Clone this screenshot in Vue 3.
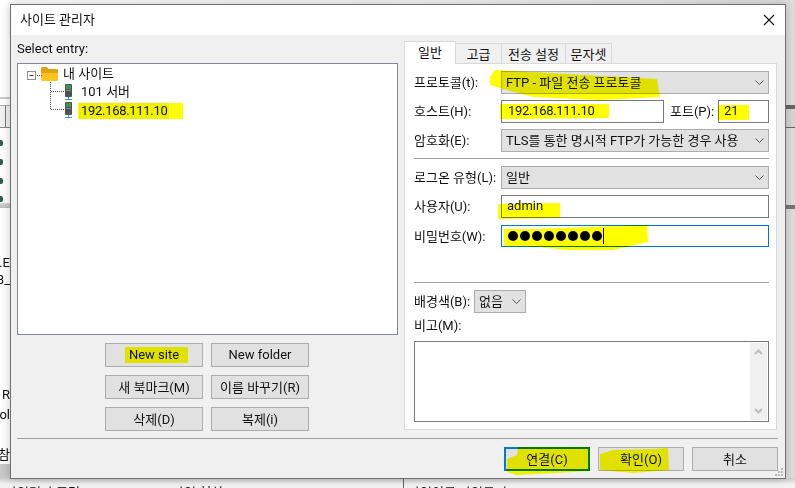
<script setup>
const siteButtons = ['New site', 'New folder', '새 북마크(M)', '이름 바꾸기(R)', '삭제(D)', '복제(i)']
const tabs = ['일반', '고급', '전송 설정', '문자셋']
const dots = 8
</script>

<template>
  <div class="desk">
    <div class="back">
      <div class="b-line l1"></div>
      <div class="b-bar left-bar"><i></i></div>
      <div class="b-bar right-bar"></div>
      <div class="b-line r2"></div>
      <i v-for="y in [140, 159, 178, 196]" :key="y" class="mini" :style="{ top: y + 'px' }"></i>
      <div class="b-line l2"></div>
      <span class="clip c1">E.E</span>
      <span class="clip c2">8_</span>
      <span class="clip c3">R</span>
      <span class="clip c4">Fol</span>
      <span class="clip c5">참</span>
      <div class="b-gray"></div>
      <div class="b-foot">
        <span class="ft a">파일명과 폴더</span>
        <span class="ft b">파일 형식</span>
        <span class="ft c">파일이름 파일크기</span>
      </div>
    </div>

    <section class="dialog">
      <header class="title">
        <span>사이트 관리자</span>
        <svg class="close" width="12" height="12" viewBox="0 0 12 12"><path d="M1 1l10 10M11 1L1 11" stroke="#111" stroke-width="1.1" fill="none"/></svg>
      </header>

      <div class="main">
        <div class="col-left">
          <div class="select-label">Select entry:</div>
          <div class="tree">
            <svg class="tree-lines" width="60" height="60" viewBox="0 0 60 60">
              <rect x="9.5" y="7.5" width="8" height="8" fill="#fff" stroke="#8f8f8f"/>
              <path d="M11.5 11.5h4" stroke="#333"/>
              <path d="M19 11.5h5M32.5 18v28M33 27.5h13M33 45.5h13" stroke="#555" stroke-dasharray="1 1" fill="none"/>
            </svg>
            <div class="node root">
              <svg width="17" height="16" viewBox="0 0 17 16">
                <path d="M0 2.5Q0 1 1.5 1h4.5l1.5 2h8Q17 3 17 4.500V7H0Z" fill="#dfa311"/>
                <path d="M0 7h17v6.500q0 1.500-1.500 1.500H1.500Q0 15 0 13.500Z" fill="#ffc31f"/>
              </svg>
              <span>내 사이트</span>
            </div>
            <div class="node child" v-for="(n, i) in ['101 서버', '192.168.111.10']" :key="n">
              <svg width="9" height="17" viewBox="0 0 9 17">
                <rect x="1" y="0" width="7" height="13" rx="1" fill="#4f5353"/>
                <rect x="2" y="1" width="5" height="4" fill="#3a9a4a"/>
                <rect x="2" y="6" width="5" height="1" fill="#8a8e8e"/>
                <path d="M4.500 13v2M1 15.500h7" stroke="#3c8fd8"/>
              </svg>
              <span :class="{ sel: i === 1, ip: i === 1 }">{{ n }}</span>
            </div>
          </div>
          <div class="site-btns">
            <button v-for="b in siteButtons" :key="b" class="btn">{{ b }}</button>
          </div>
        </div>

        <div class="col-right">
          <div class="tabs">
            <div v-for="(t, i) in tabs" :key="t" class="tab" :class="['t' + i, { on: i === 0 }]">{{ t }}</div>
          </div>
          <div class="panel">
            <div class="row">
              <label>프로토콜(t):</label>
              <div class="combo grow"><span>FTP - 파일 전송 프로토콜</span><svg class="chev" width="9" height="5" viewBox="0 0 9 5"><path d="M.5.500l4 4 4-4" fill="none" stroke="#555"/></svg></div>
            </div>
            <div class="row">
              <label>호스트(H):</label>
              <div class="input host ip">192.168.111.10</div>
              <label class="port-label">포트(P):</label>
              <div class="input port">21</div>
            </div>
            <div class="row">
              <label>암호화(E):</label>
              <div class="combo grow"><span>TLS를 통한 명시적 FTP가 가능한 경우 사용</span><svg class="chev" width="9" height="5" viewBox="0 0 9 5"><path d="M.5.500l4 4 4-4" fill="none" stroke="#555"/></svg></div>
            </div>
            <hr class="sep s1" />
            <div class="row">
              <label>로그온 유형(L):</label>
              <div class="combo grow"><span>일반</span><svg class="chev" width="9" height="5" viewBox="0 0 9 5"><path d="M.5.500l4 4 4-4" fill="none" stroke="#555"/></svg></div>
            </div>
            <div class="row">
              <label>사용자(U):</label>
              <div class="input grow user">admin</div>
            </div>
            <div class="row pw-row">
              <label>비밀번호(W):</label>
              <div class="input grow pw" aria-label="password">
                <i v-for="d in dots" :key="d" class="dot"></i><i class="caret"></i>
              </div>
            </div>
            <hr class="sep s2" />
            <div class="row color-row">
              <label>배경색(B):</label>
              <div class="combo small"><span>없음</span><svg class="chev" width="9" height="5" viewBox="0 0 9 5"><path d="M.5.500l4 4 4-4" fill="none" stroke="#555"/></svg></div>
            </div>
            <div class="memo-label">비고(M):</div>
            <div class="memo">
              <div class="scroll">
                <svg width="9" height="6" viewBox="0 0 9 6"><path d="M1 5l3.500-3.500L8 5" fill="none" stroke="#bdbdbd" stroke-width="2"/></svg>
                <svg width="9" height="6" viewBox="0 0 9 6"><path d="M1 1l3.500 3.500L8 1" fill="none" stroke="#bdbdbd" stroke-width="2"/></svg>
              </div>
            </div>
          </div>
        </div>
      </div>

      <hr class="bottom-sep" />
      <footer class="actions">
        <button class="btn act primary">연결(C)</button>
        <button class="btn act">확인(O)</button>
        <button class="btn act">취소</button>
      </footer>
      <svg class="grip" width="9" height="9" viewBox="0 0 9 9"><path d="M6 0h2v2H6zM3 3h2v2H3zM6 3h2v2H6zM0 6h2v2H0zM3 6h2v2H3zM6 6h2v2H6z" fill="#b8b8b8"/></svg>
    </section>

    <svg class="marker" width="795" height="488" viewBox="0 0 795 488">
      <g fill="#ffff00">
        <path d="M78 103h105v16H78z"/>
        <path d="M490 77l5-7 55 3 107 6 3 18-60 3-67-3-33-9-10-3z"/>
        <path d="M500 104l109 0v14l-109 1z"/>
        <path d="M718 105h31v15h-31z"/>
        <path d="M498 204l62-1v15l-62 1z"/>
        <path d="M504 229h30l113-4 1 17-35 8-46 0-28-3-35-1z"/>
        <path d="M125 347h63v16h-63z"/>
        <path d="M507 459l10-4 1-8h72v24l-34 2-40 2-9-3z"/>
        <path d="M600 454l13-4 40-1 15-1 1 22-36 3-33-3z"/>
      </g>
    </svg>
  </div>
</template>

<style>
html, body { margin: 0; padding: 0; background: #f0f0f0; }
</style>

<style scoped>
* { box-sizing: border-box; }
.desk {
  position: relative;
  width: 795px;
  height: 488px;
  overflow: hidden;
  font: 13px Roboto, "Noto Sans CJK KR", sans-serif;
  color: #111;
  background: linear-gradient(90deg, #fff 0, #f1f1f1 60%, #ddd 100%);
}
.back { position: absolute; inset: 0; }
.b-line { position: absolute; }
.l1 { left: 0; top: 97px; width: 10px; height: 2px; background: #c9c9c9; }
.l2 { left: 0; top: 203px; width: 10px; height: 5px; background: linear-gradient(#d8d8d8, #bbb); }
.r2 { left: 786px; top: 205px; width: 9px; height: 4px; background: #777; }
.b-bar { position: absolute; top: 105px; height: 23px; background: #ebebeb; }
.left-bar { left: 0; width: 10px; border-top: 1px solid #aaa; border-bottom: 1px solid #888; background: #f2f2f2; }
.left-bar i { position: absolute; left: 5px; top: 0; bottom: 0; width: 1px; background: #777; }
.right-bar { left: 786px; width: 9px; border-top: 4px solid #666; border-bottom: 1px solid #666; background: #d5d5d5; }
.mini { position: absolute; left: 0; width: 3px; height: 6px; background: #2f5f4a; border-radius: 0 2px 2px 0; }
.clip { position: absolute; right: 785px; white-space: nowrap; }
.c1 { top: 255px; }
.c2 { top: 272px; }
.c3 { top: 387px; }
.c4 { top: 407px; }
.c5 { top: 444px; }
.b-gray { position: absolute; left: 0; top: 464px; width: 10px; height: 14px; background: #c8c8c8; }
.b-foot { position: absolute; left: 0; right: 0; top: 478px; height: 10px; overflow: hidden; background: linear-gradient(#ccc, #f2f2f2 60%); }
.b-foot::after { content: ""; position: absolute; left: 403px; top: 0; bottom: 0; width: 1px; background: #666; }
.ft { position: absolute; top: 7px; white-space: nowrap; line-height: 16px; }
.ft.a { left: 5px; }
.ft.b { left: 172px; }
.ft.c { left: 408px; }

.dialog {
  position: absolute;
  left: 10px;
  top: 4px;
  width: 776px;
  height: 475px;
  border: 1px solid #6f6f6f;
  background: #f0f0f0;
  box-shadow: 0 0 9px rgba(0, 0, 0, .22);
}
.title {
  height: 30px;
  background: #fff;
  display: flex;
  align-items: center;
  justify-content: space-between;
  padding: 0 10px 0 9px;
}
.title span { padding-bottom: 3px; }
.close { margin-bottom: 1px; }
.main { display: flex; height: 395px; padding-left: 6px; }
.col-left { width: 381px; }
.select-label { height: 28px; line-height: 27px; }
.tree {
  position: relative;
  height: 272px;
  background: #fff;
  border: 1px solid #828790;
}
.tree-lines { position: absolute; left: 0; top: 0; }
.node { display: flex; align-items: center; height: 18.500px; }
.node.root { padding-left: 23px; gap: 3px; height: 19px; }
.node.child { padding-left: 46px; gap: 6px; }
.node span { padding: 0 2px 1px; line-height: 17px; }
.node .sel { background: #f0f0f0; }
.ip { letter-spacing: -.3px; }
.site-btns {
  display: grid;
  grid-template-columns: 98px 98px;
  grid-auto-rows: 24px;
  gap: 8px;
  padding-left: 88px;
  margin-top: 8px;
}
.btn {
  font: inherit;
  color: inherit;
  background: #e1e1e1;
  border: 1px solid #adadad;
  padding: 0 0 2px;
}

.col-right { width: 373px; margin-left: 6px; padding-top: 6px; }
.tabs { display: flex; height: 22px; align-items: flex-end; position: relative; z-index: 1; }
.tab {
  height: 20px;
  background: #f0f0f0;
  border: 1px solid #d9d9d9;
  border-bottom: 0;
  border-left: 0;
  display: flex;
  align-items: center;
  justify-content: center;
}
.tab.on { height: 23px; margin-bottom: -1px; background: #fff; border-left: 1px solid #d9d9d9; padding-bottom: 4px; }
.t0 { width: 52px; }
.t1 { width: 46px; }
.t2 { width: 64px; }
.t3 { width: 46px; }
.panel {
  height: 367px;
  background: #fff;
  border: 1px solid #d9d9d9;
  padding: 7px 7px 0 9px;
}
.row { display: flex; align-items: center; height: 23px; margin-bottom: 6px; }
.row label { width: 87px; flex: none; padding-bottom: 2px; }
.row .port-label { width: 48px; margin-left: 6px; }
.combo, .input {
  height: 23px;
  display: flex;
  align-items: center;
}
.combo {
  background: #e1e1e1;
  border: 1px solid #adadad;
  padding: 0 4px;
  justify-content: space-between;
}
.combo span { padding-bottom: 2px; }
.chev { flex: none; }
.input { border: 1px solid #7a7a7a; background: #fff; padding: 0 6px 2px; }
.grow { flex: 1; }
.host { width: 163px; flex: none; }
.port { width: 51px; flex: none; padding-left: 5px; }
.sep { margin: 0; border: 0; height: 1px; background: #a0a0a0; }
.s1 { margin-bottom: 7px; }
.user { padding-left: 5px; }
.pw-row { margin-top: 7px; margin-bottom: 0; height: 22px; }
.pw { height: 22px; border-color: #0078d7; gap: 2px; padding: 0 0 0 6px; }
.dot { width: 10px; height: 10px; border-radius: 50%; background: #000; flex: none; }
.caret { width: 1px; height: 16px; background: #000; margin-left: -1px; }
.s2 { margin-top: 35px; margin-bottom: 7px; }
.color-row { margin-bottom: 0; }
.color-row label { width: 60px; }
.small { width: 52px; }
.memo-label { height: 28px; line-height: 25px; }
.memo {
  height: 81px;
  border: 1px solid #7a7a7a;
  display: flex;
  justify-content: flex-end;
  padding: 1px;
}
.scroll {
  width: 17px;
  background: #f0f0f0;
  display: flex;
  flex-direction: column;
  align-items: center;
  justify-content: space-between;
  padding: 6px 0;
}
.bottom-sep { margin: 8px 7px 0 6px; border: 0; height: 1px; background: #a0a0a0; }
.actions { display: flex; justify-content: flex-end; gap: 8px; padding: 8px 7px 0 0; }
.act { width: 86px; height: 24px; }
.primary { border: 2px solid #0078d7; }
.grip { position: absolute; right: 1px; bottom: 1px; }
.marker { position: absolute; left: 0; top: 0; mix-blend-mode: multiply; pointer-events: none; }
</style>
